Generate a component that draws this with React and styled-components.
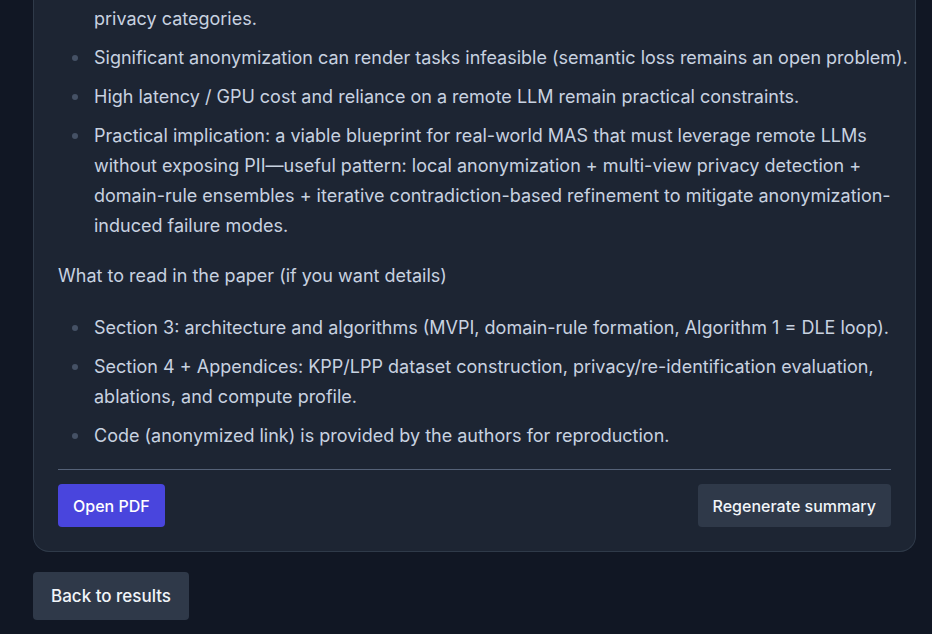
import React from "react";
import styled, { createGlobalStyle } from "styled-components";

const GlobalStyle = createGlobalStyle`
  * { box-sizing: border-box; }
  html { background: #111724; }
  body {
    margin: 0;
    background: #111724;
    color: #c8d2e0;
    font-family: Inter, "Liberation Sans", sans-serif;
    font-size: 18px;
    line-height: 30px;
  }
`;

const Page = styled.main`
  padding: 0 16px 14px 33px;
`;

const Card = styled.article`
  padding: 4px 24px 24px;
  background: #1d2533;
  border: 1px solid #2f3a49;
  border-top: 0;
  border-radius: 0 0 16px 16px;
`;

const List = styled.ul`
  margin: 0 -20px 0 0;
  padding: 0 0 0 36px;
  list-style: none;
`;

const Item = styled.li`
  position: relative;
  & + & { margin-top: 9px; }
  &::before {
    content: "";
    display: ${(p) => (p.$continued ? "none" : "block")};
    position: absolute;
    left: -22px;
    top: 12px;
    width: 6px;
    height: 6px;
    border-radius: 50%;
    background: #455165;
  }
`;

const Paragraph = styled.p`
  margin: 20px 0 22px;
`;

const Actions = styled.footer`
  display: flex;
  justify-content: space-between;
  margin-top: 18px;
  padding-top: 14px;
  border-top: 1px solid #556278;
`;

const Button = styled.button`
  height: ${(p) => (p.$large ? 48 : 43)}px;
  padding: 0 ${(p) => (p.$large ? 18 : 15)}px;
  border: 0;
  border-radius: 4px;
  background: ${(p) => (p.$primary ? "#4945dd" : "#2f3949")};
  color: ${(p) => (p.$primary ? "#ffffff" : "#f1f5f9")};
  font-family: inherit;
  font-size: ${(p) => (p.$large ? 17 : 16)}px;
  font-weight: 500;
  line-height: 24px;
  cursor: pointer;
`;

const Navigation = styled.nav`
  display: flex;
  margin-top: 20px;
`;

export default function App() {
  return (
    <>
      <GlobalStyle />
      <Page>
        <Card>
          <List>
            <Item $continued>privacy categories.</Item>
            <Item>Significant anonymization can render tasks infeasible (semantic loss remains an open problem).</Item>
            <Item>High latency / GPU cost and reliance on a remote LLM remain practical constraints.</Item>
            <Item>
              Practical implication: a viable blueprint for real-world MAS that must leverage remote LLMs without
              exposing PII—useful pattern: local anonymization + multi-view privacy detection + domain-rule ensembles
              + iterative contradiction-based refinement to mitigate anonymization-induced failure modes.
            </Item>
          </List>
          <Paragraph>What to read in the paper (if you want details)</Paragraph>
          <List>
            <Item>Section 3: architecture and algorithms (MVPI, domain-rule formation, Algorithm 1 = DLE loop).</Item>
            <Item>
              Section 4 + Appendices: KPP/LPP dataset construction, privacy/re-identification evaluation, ablations,
              and compute profile.
            </Item>
            <Item>Code (anonymized link) is provided by the authors for reproduction.</Item>
          </List>
          <Actions>
            <Button type="button" $primary>Open PDF</Button>
            <Button type="button">Regenerate summary</Button>
          </Actions>
        </Card>
        <Navigation>
          <Button type="button" $large>Back to results</Button>
        </Navigation>
      </Page>
    </>
  );
}
